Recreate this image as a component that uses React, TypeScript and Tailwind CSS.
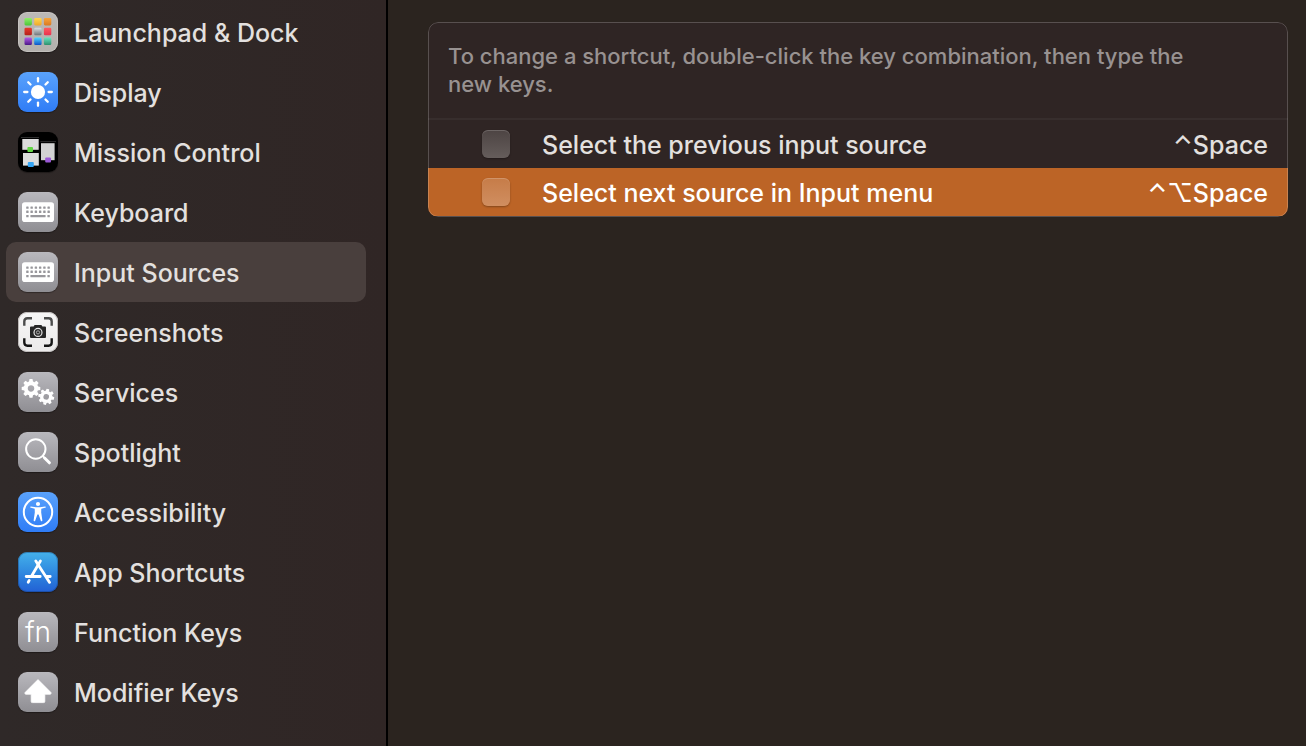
import React, { useState } from "react";

function Tile({ children, className }: { children: React.ReactNode; className: string }) {
  return (
    <span className={`block size-10 shrink-0 overflow-hidden rounded-[9px] bg-linear-to-b shadow-[0_1px_1px_rgba(0,0,0,0.35)] ${className}`}>
      <svg viewBox="0 0 40 40" className="block size-10" aria-hidden="true">
        {children}
      </svg>
    </span>
  );
}

const GRAY = "from-[#b9b8bd] to-[#8f8e93]";
const BLUE = "from-[#5aa2fb] to-[#2f7cf6]";

const PAD_COLORS: [string, string][] = [
  ["#8ff06a", "#4cc53a"],
  ["#ffd84f", "#efa92c"],
  ["#f9a53b", "#d97a22"],
  ["#e8392c", "#b3211b"],
  ["#d9dde0", "#6f7579"],
  ["#ff5a5f", "#e8324f"],
  ["#b45be8", "#4a1685"],
  ["#4fd6ff", "#0d52c8"],
  ["#67e3c0", "#2f8f6c"],
];

function LaunchpadIcon() {
  return (
    <Tile className="from-[#bcb9b6] to-[#b3b0ad]">
      <defs>
        {PAD_COLORS.map(([a, b], i) => (
          <linearGradient key={i} id={`pad${i}`} x1="0" y1="0" x2="0" y2="1">
            <stop offset="0" stopColor={a} />
            <stop offset="1" stopColor={b} />
          </linearGradient>
        ))}
      </defs>
      <rect x="0.5" y="0.5" width="39" height="39" rx="8.5" fill="none" stroke="#d3d0cd" strokeWidth="1" opacity="0.5" />
      {PAD_COLORS.map((_, i) => (
        <rect key={i} x={6.5 + (i % 3) * 9.7} y={6 + Math.floor(i / 3) * 9.8} width="7.4" height="7.4" rx="1.3" fill={`url(#pad${i})`} />
      ))}
    </Tile>
  );
}

function DisplayIcon() {
  return (
    <Tile className={BLUE}>
      <circle cx="20" cy="20" r="7.1" fill="#fff" />
      <g stroke="#fff" strokeWidth="2.3" strokeLinecap="round">
        {[0, 45, 90, 135, 180, 225, 270, 315].map((a) => (
          <path key={a} d="M20 9.4V6.2" transform={`rotate(${a} 20 20)`} />
        ))}
      </g>
    </Tile>
  );
}

function MissionControlIcon() {
  return (
    <Tile className="from-black to-black">
      <rect x="4.3" y="7" width="16.4" height="10.8" fill="#dcdcdc" />
      <rect x="5" y="21" width="15.8" height="12.6" fill="#dcdcdc" />
      <rect x="23" y="11.2" width="13.6" height="17" fill="#d2d2d2" />
      <rect x="9.4" y="15" width="5.6" height="5" rx="1" fill="#62d644" />
      <rect x="9.8" y="30" width="6" height="5" rx="1" fill="#35a5f4" />
      <rect x="27.2" y="25.4" width="5.8" height="5" rx="1" fill="#9b59d6" />
      <path d="M3 5.5H21M22.4 9.6H38" stroke="#3a3a3a" strokeWidth="0.8" />
    </Tile>
  );
}

function KeyboardIcon() {
  return (
    <Tile className={GRAY}>
      <rect x="4" y="10.2" width="32" height="19.8" rx="2.8" fill="#fff" />
      <g fill="#98979c">
        {[0, 1, 2, 3, 4, 5].map((c) => (
          <g key={c}>
            <rect x={8.2 + c * 4.25} y="14.4" width="2.4" height="2.4" rx="0.5" />
            <rect x={8.2 + c * 4.25} y="18.6" width="2.4" height="2.4" rx="0.5" />
          </g>
        ))}
        <rect x="8.2" y="22.9" width="2.4" height="2.4" rx="0.5" />
        <rect x="12.4" y="22.9" width="15.2" height="2.4" rx="0.6" />
        <rect x="29.4" y="22.9" width="2.4" height="2.4" rx="0.5" />
      </g>
    </Tile>
  );
}

function ScreenshotsIcon() {
  return (
    <Tile className="from-[#f7f6f6] to-[#ebeaea]">
      <rect x="0.5" y="0.5" width="39" height="39" rx="8.5" fill="none" stroke="#bdb9b8" strokeWidth="1" />
      <g fill="none" strokeWidth="2.4">
        <path d="M6.3 13.8V9.4Q6.3 6.3 9.4 6.3H14M26 6.3H30.6Q33.7 6.3 33.7 9.4V13.8" stroke="#4c4c4c" />
        <path d="M33.7 26.2V30.6Q33.7 33.7 30.6 33.7H26M14 33.7H9.4Q6.3 33.7 6.3 30.6V26.2" stroke="#161616" />
      </g>
      <path d="M13 14.6H15.6L16.6 13H23.4L24.4 14.6H27Q28 14.6 28 15.6V25Q28 26 27 26H13Q12 26 12 25V15.6Q12 14.6 13 14.6Z" fill="#262626" />
      <circle cx="20" cy="20.4" r="4" fill="#2c2c2c" stroke="#e4e4e4" strokeWidth="1.2" />
      <circle cx="20" cy="20.4" r="1.6" fill="none" stroke="#b5b5b5" strokeWidth="0.9" />
    </Tile>
  );
}

function Gear({ x, y, r, turn }: { x: number; y: number; r: number; turn: number }) {
  return (
    <g transform={`translate(${x} ${y}) rotate(${turn})`}>
      <circle r={r * 0.56} fill="none" stroke="#fff" strokeWidth={r * 0.42} />
      {[0, 45, 90, 135, 180, 225, 270, 315].map((a) => (
        <path key={a} d={`M${-r * 0.22} ${-r * 0.7}L${-r * 0.16} ${-r}H${r * 0.16}L${r * 0.22} ${-r * 0.7}Z`} fill="#fff" transform={`rotate(${a})`} />
      ))}
    </g>
  );
}

function ServicesIcon() {
  return (
    <Tile className={GRAY}>
      <Gear x={13} y={16.4} r={9.3} turn={0} />
      <Gear x={28.2} y={24.8} r={8} turn={12} />
    </Tile>
  );
}

function SpotlightIcon() {
  return (
    <Tile className={GRAY}>
      <circle cx="17.8" cy="17" r="9.7" fill="none" stroke="#fff" strokeWidth="2" />
      <path d="M24.8 24.2L26.6 26" stroke="#fff" strokeWidth="1.8" />
      <path d="M26.6 26L31.4 30.8" stroke="#fff" strokeWidth="3" strokeLinecap="round" />
    </Tile>
  );
}

function AccessibilityIcon() {
  return (
    <Tile className={BLUE}>
      <circle cx="20" cy="20" r="14.2" fill="none" stroke="#fff" strokeWidth="2" />
      <circle cx="20" cy="12" r="2.1" fill="#fff" />
      <path
        d="M12.9 14.4L18 15.3H22L27.1 14.4Q28 14.5 27.8 15.4L23.3 16.8L23.2 20.6L24.4 28.6Q23.9 29.8 22.9 29L20.6 22.4H19.4L17.1 29Q16.1 29.8 15.6 28.6L16.8 20.6L16.7 16.8L12.2 15.4Q12 14.5 12.9 14.4Z"
        fill="#fff"
      />
    </Tile>
  );
}

function AppShortcutsIcon() {
  return (
    <Tile className="from-[#45b1ea] to-[#2360d4]">
      <rect x="0.5" y="0.5" width="39" height="39" rx="8.5" fill="none" stroke="#12366f" strokeWidth="1" opacity="0.4" />
      <g stroke="#fff" strokeWidth="2.8" strokeLinecap="round" fill="none">
        <path d="M22.4 9L13.6 24" />
        <path d="M17.8 9L31.6 30.4" />
        <path d="M8.2 24.5H22.2M28.4 24.5H32.2" />
        <path d="M11.2 28.4L10.2 30.2" />
      </g>
    </Tile>
  );
}

function FunctionKeysIcon() {
  return (
    <span className="flex size-10 shrink-0 items-center justify-center rounded-[9px] bg-linear-to-b from-[#b9b8bd] to-[#8f8e93] text-[28px] leading-10 font-light text-white shadow-[0_1px_1px_rgba(0,0,0,0.35)]" aria-hidden="true">
      fn
    </span>
  );
}

function ModifierKeysIcon() {
  return (
    <Tile className={GRAY}>
      <path
        d="M20 7.6L33 20.6Q33.6 22 32.2 22.2H26.8V29.4Q26.8 30.6 25.6 30.6H14.4Q13.2 30.6 13.2 29.4V22.2H7.8Q6.4 22 7 20.6Z"
        fill="#fff"
        stroke="#fff"
        strokeWidth="0.8"
        strokeLinejoin="round"
      />
    </Tile>
  );
}

const CATEGORIES = [
  { name: "Launchpad & Dock", Icon: LaunchpadIcon },
  { name: "Display", Icon: DisplayIcon },
  { name: "Mission Control", Icon: MissionControlIcon },
  { name: "Keyboard", Icon: KeyboardIcon },
  { name: "Input Sources", Icon: KeyboardIcon },
  { name: "Screenshots", Icon: ScreenshotsIcon },
  { name: "Services", Icon: ServicesIcon },
  { name: "Spotlight", Icon: SpotlightIcon },
  { name: "Accessibility", Icon: AccessibilityIcon },
  { name: "App Shortcuts", Icon: AppShortcutsIcon },
  { name: "Function Keys", Icon: FunctionKeysIcon },
  { name: "Modifier Keys", Icon: ModifierKeysIcon },
];

const SHORTCUTS = [
  { id: "previous", name: "Select the previous input source", keys: "⌃Space", highlighted: false },
  { id: "next", name: "Select next source in Input menu", keys: "⌃⌥Space", highlighted: true },
];

export default function App() {
  const [enabled, setEnabled] = useState<Record<string, boolean>>({});

  return (
    <div className="flex min-h-screen bg-[#2b241f] font-[Inter,'Liberation_Sans',sans-serif] text-[25px] font-medium text-[#e3e0df]">
      <nav aria-label="Shortcut categories" className="w-[388px] shrink-0 border-r-2 border-black bg-linear-to-r from-[#2f2928] to-[#302625] pt-0.5 pr-5 pl-1.5">
        <ul>
          {CATEGORIES.map(({ name, Icon }) => (
            <li key={name}>
              <a
                href="#"
                aria-current={name === "Input Sources" ? "page" : undefined}
                className="flex h-15 items-center gap-4 rounded-[10px] px-3 aria-[current=page]:bg-[#493f3d]"
              >
                <Icon />
                <span className="pt-1">{name}</span>
              </a>
            </li>
          ))}
        </ul>
      </nav>

      <main className="min-w-0 flex-1 pt-[22px] pr-[18px] pl-10">
        <section className="relative overflow-hidden rounded-[10px] bg-[#2f2524] pb-px">
          <p className="border-b-2 border-[#372e2d] pt-5 pr-20 pb-5 pl-5 text-[22px] leading-7 text-[#989291]">
            To change a shortcut, double-click the key combination, then type the new keys.
          </p>
          <ul>
            {SHORTCUTS.map(({ id, name, keys, highlighted }) => (
              <li
                key={id}
                className={`flex h-12 items-center pr-5 pl-[54px] ${highlighted ? "bg-[#bc6426] text-white" : ""}`}
              >
                <input
                  id={id}
                  type="checkbox"
                  checked={!!enabled[id]}
                  onChange={(e) => setEnabled({ ...enabled, [id]: e.target.checked })}
                  className={`size-7 shrink-0 appearance-none rounded-md bg-linear-to-b shadow-[0_1px_2px_rgba(0,0,0,0.3),inset_0_1px_0_rgba(255,255,255,0.18)] ${
                    highlighted ? "from-[#c67c48] to-[#d08e60]" : "from-[#4d4443] to-[#655d5b]"
                  }`}
                />
                <label htmlFor={id} className="ml-8 flex-1 pt-1">
                  {name}
                </label>
                <kbd className="pt-1 font-[Inter,'Liberation_Sans',sans-serif]">{keys}</kbd>
              </li>
            ))}
          </ul>
          <div className="pointer-events-none absolute inset-0 rounded-[10px] border border-white/20" />
        </section>
      </main>
    </div>
  );
}
